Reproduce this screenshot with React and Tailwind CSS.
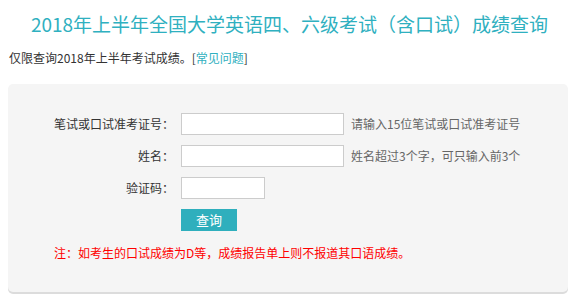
const font = { fontFamily: '"Noto Sans CJK SC", "Noto Sans", sans-serif' }

const FormRow = ({ label, inputWidth, hint }) => (
  <div className="flex items-center h-[22px]">
    <label className="w-[166px] text-right text-[12px] text-[#333] leading-[22px]">{label}</label>
    <input
      type="text"
      className={`ml-[7px] h-[22px] border border-[#ccc] bg-white outline-none ${inputWidth}`}
    />
    {hint && <span className="ml-[7px] text-[12px] text-[#666] leading-[22px]">{hint}</span>}
  </div>
)

export default function App() {
  return (
    <div className="min-h-screen bg-white px-2" style={font}>
      <h1 className="h-[48px] text-center text-[19px] leading-[48px] text-[#2fb0c0]">
        2018年上半年全国大学英语四、六级考试（含口试）成绩查询
      </h1>
      <p className="pl-px text-[12px] leading-[20px] text-[#333]">
        仅限查询2018年上半年考试成绩。[<a href="#" className="text-[#2fb0c0]">常见问题</a>]
      </p>

      <div className="mt-4 w-[560px] rounded-[5px] bg-[#f5f5f5] pt-[29px] pb-[29px] shadow-[0_2px_0_#dcdcdc]">
        <div className="flex flex-col gap-[10px]">
          <FormRow label="笔试或口试准考证号：" inputWidth="w-[163px]" hint="请输入15位笔试或口试准考证号" />
          <FormRow label="姓名：" inputWidth="w-[163px]" hint="姓名超过3个字，可只输入前3个" />
          <FormRow label="验证码：" inputWidth="w-[84px]" />
          <div className="flex">
            <button
              type="button"
              className="ml-[173px] h-[22px] w-[56px] bg-[#2fafbd] text-[13px] leading-[22px] text-white"
            >
              查询
            </button>
          </div>
        </div>
        <p className="mt-3 pl-[46px] text-[12px] leading-[20px] text-[#f00]">
          注：如考生的口试成绩为D等，成绩报告单上则不报道其口语成绩。
        </p>
      </div>
    </div>
  )
}
